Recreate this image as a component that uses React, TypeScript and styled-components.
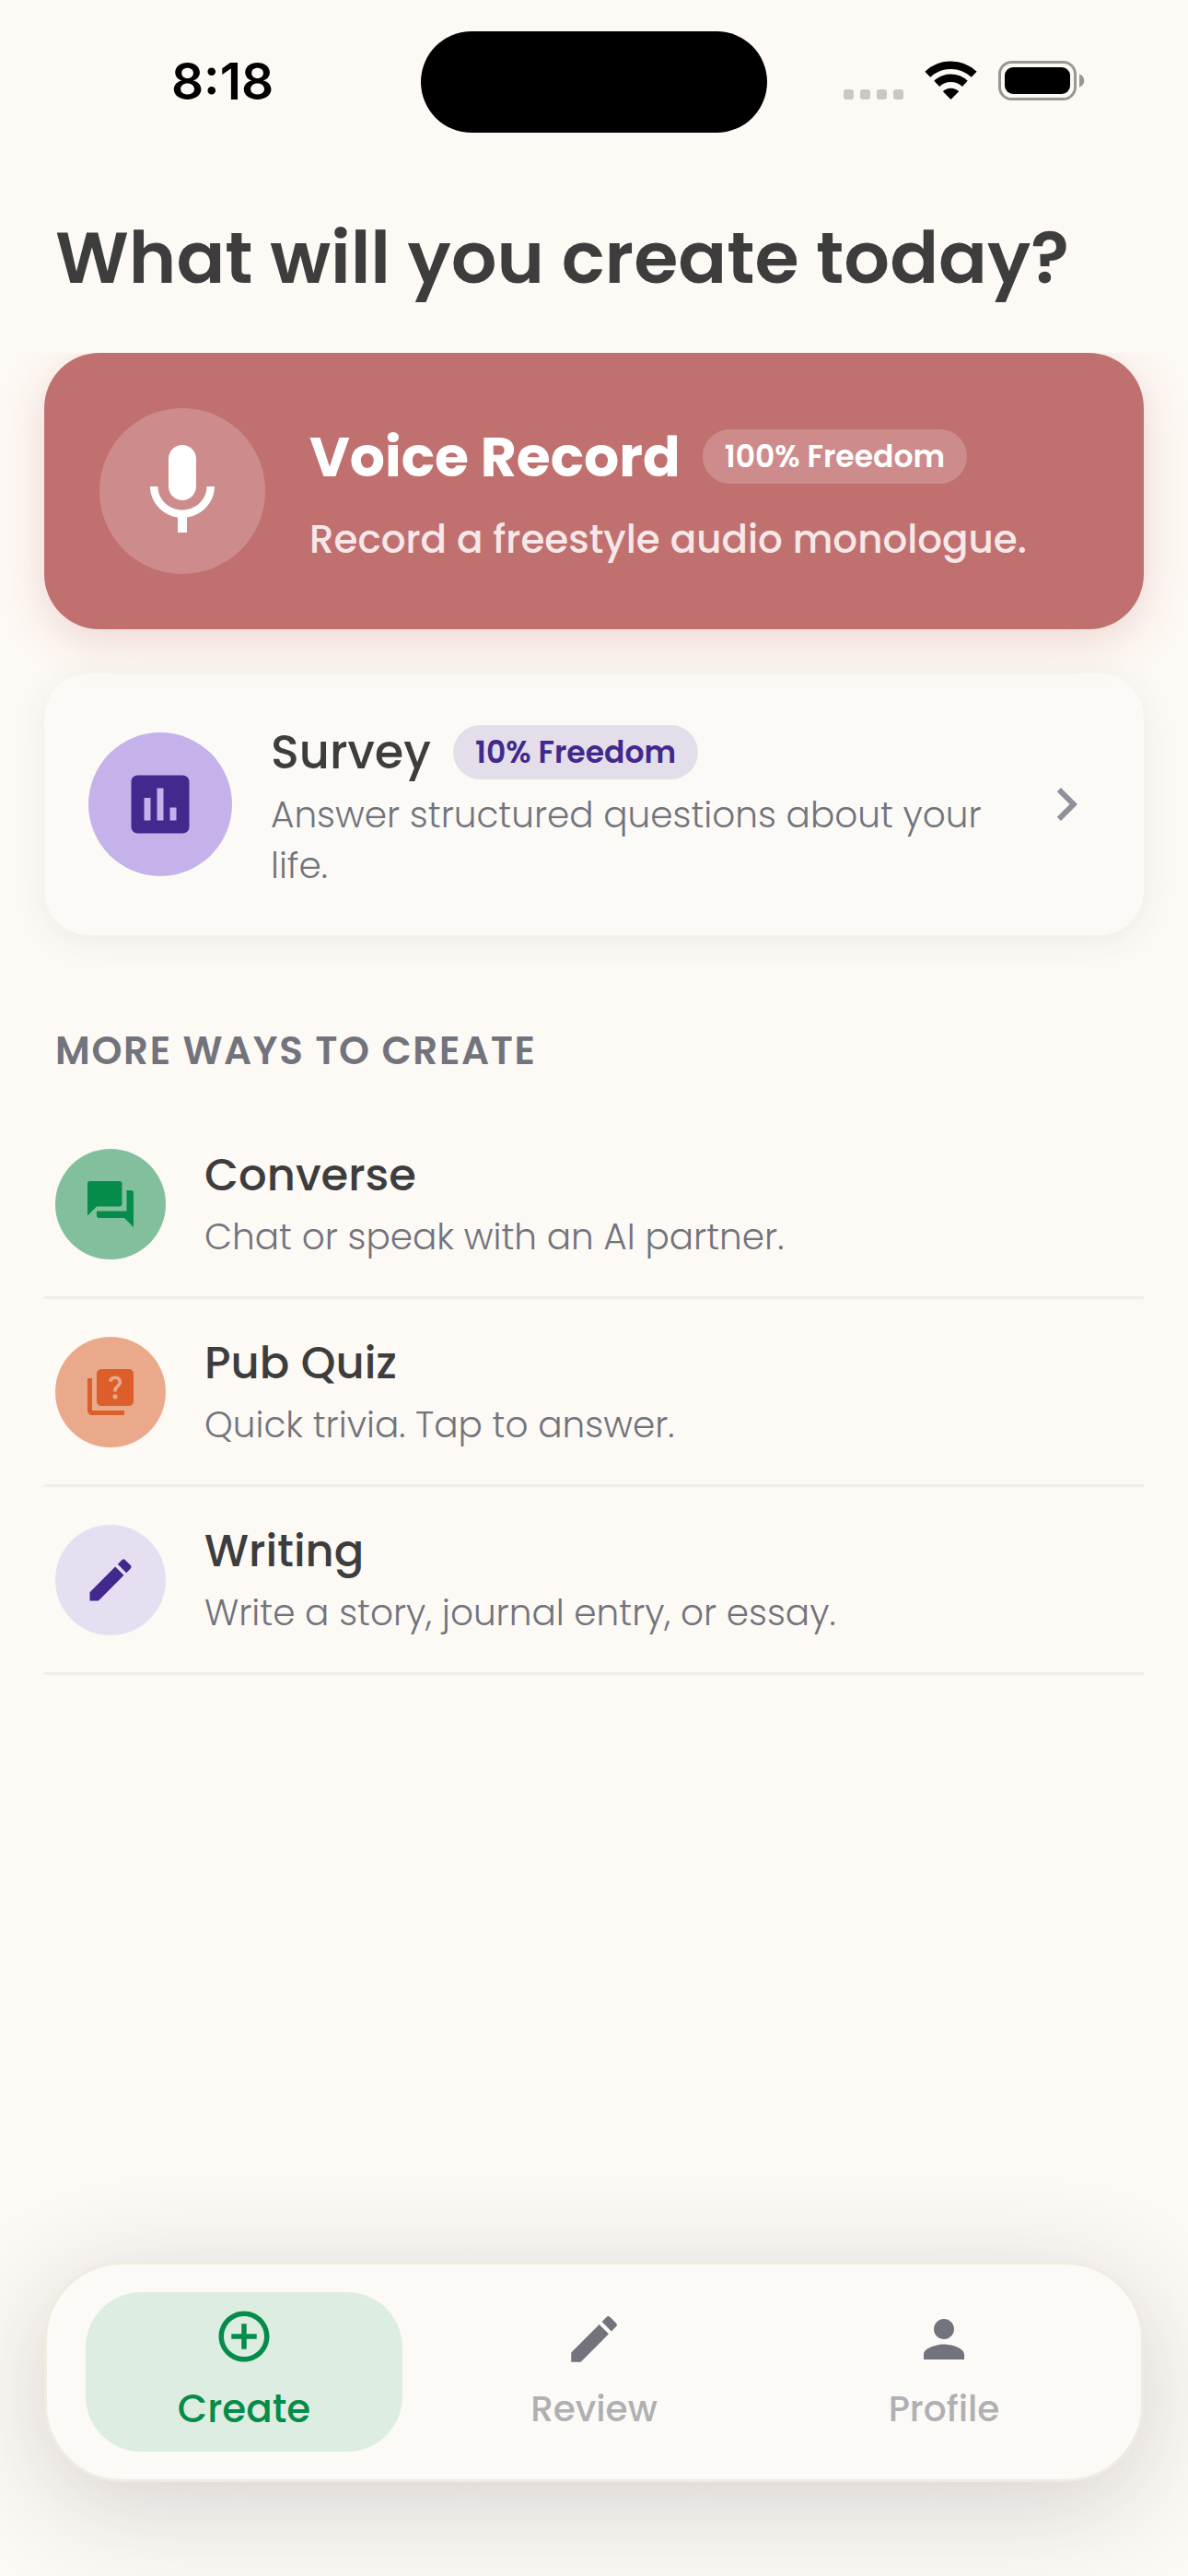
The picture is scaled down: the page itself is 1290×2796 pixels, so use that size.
import React from "react";
import styled, { createGlobalStyle } from "styled-components";
import {
  MdMic,
  MdPoll,
  MdChevronRight,
  MdForum,
  MdQuiz,
  MdEdit,
  MdAddCircleOutline,
  MdPerson,
} from "react-icons/md";

const font = 'Poppins, Inter, "Noto Sans", sans-serif';

const GlobalStyle = createGlobalStyle`
  *, *::before, *::after { box-sizing: border-box; }
  body {
    margin: 0;
    background: #fdf9f4;
    color: #3d3d3d;
    font-family: ${font};
  }
  button { font: inherit; color: inherit; border: 0; background: none; padding: 0; text-align: left; cursor: pointer; }
  a { color: inherit; text-decoration: none; }
  h1, h2, p, ul { margin: 0; padding: 0; }
  svg { display: block; flex: none; }
`;

const Screen = styled.div`
  min-height: 100vh;
  display: flex;
  flex-direction: column;
`;

const StatusBar = styled.header`
  display: grid;
  grid-template-columns: 1fr 376px 1fr;
  align-items: center;
  padding-top: 34px;
`;

const Time = styled.time`
  padding: 0 0 3px 26px;
  text-align: center;
  font-family: Inter, sans-serif;
  font-size: 55px;
  line-height: 66px;
  font-weight: 600;
  color: #000;
`;

const Island = styled.div`
  height: 110px;
  border-radius: 55px;
  background: #000;
`;

const StatusIcons = styled.div`
  display: flex;
  justify-content: flex-end;
  padding: 0 112px 3px 0;
`;

const Main = styled.main`
  flex: 1;
  display: flex;
  flex-direction: column;
  padding: 81px 48px 48px;
`;

const Heading = styled.h1`
  padding: 0 12px;
  font-size: 78px;
  line-height: 110px;
  font-weight: 600;
`;

const Card = styled.button<{ $featured?: boolean }>`
  display: flex;
  align-items: center;
  width: 100%;
  gap: ${(p) => (p.$featured ? 48 : 42)}px;
  margin-top: 48px;
  padding: ${(p) => (p.$featured ? "60px" : "48px")};
  border-radius: ${(p) => (p.$featured ? 60 : 48)}px;
  background: ${(p) => (p.$featured ? "#c17070" : "#fcfaf6")};
  box-shadow: ${(p) =>
    p.$featured
      ? "0 12px 48px rgba(193, 112, 112, 0.25)"
      : "0 6px 36px rgba(60, 60, 80, 0.08)"};
  clip-path: ${(p) => (p.$featured ? "inset(0 -48px -72px)" : "none")};
`;

const Disc = styled.span<{ $size: number; $bg: string; $fg: string }>`
  flex: none;
  display: flex;
  align-items: center;
  justify-content: center;
  width: ${(p) => p.$size}px;
  height: ${(p) => p.$size}px;
  border-radius: 50%;
  background: ${(p) => p.$bg};
  color: ${(p) => p.$fg};
`;

const CardBody = styled.span<{ $gap: number }>`
  flex: 1;
  display: flex;
  flex-direction: column;
  gap: ${(p) => p.$gap}px;
`;

const TitleRow = styled.span`
  display: flex;
  align-items: center;
  gap: 24px;
`;

const FeaturedTitle = styled.span`
  font-size: 60px;
  line-height: 90px;
  font-weight: 700;
  color: #fff;
`;

const FeaturedText = styled.span`
  font-size: 42px;
  line-height: 60px;
  font-weight: 500;
  color: #f6e8e8;
`;

const CardTitle = styled.span`
  font-size: 51px;
  line-height: 75px;
  font-weight: 500;
`;

const Muted = styled.span`
  font-size: 39px;
  line-height: 55px;
  font-weight: 300;
  color: #72737c;
`;

const Badge = styled.span<{ $bg: string; $fg: string }>`
  padding: 0 24px;
  border-radius: 30px;
  font-size: 33px;
  line-height: 59px;
  font-weight: 600;
  background: ${(p) => p.$bg};
  color: ${(p) => p.$fg};
`;

const SectionLabel = styled.h2`
  margin-top: 94px;
  padding: 0 12px;
  font-size: 42px;
  line-height: 63px;
  font-weight: 600;
  letter-spacing: 0.04em;
  color: #72737c;
`;

const List = styled.ul`
  list-style: none;
  margin-top: 34px;
`;

const Item = styled.li`
  border-bottom: 3px solid #f1eeea;
`;

const ItemButton = styled.button`
  display: flex;
  align-items: center;
  gap: 42px;
  width: 100%;
  height: 201px;
  padding: 0 12px;
`;

const ItemBody = styled.span`
  display: flex;
  flex-direction: column;
  gap: 6px;
`;

const ItemTitle = styled.span`
  font-size: 48px;
  line-height: 66px;
  font-weight: 500;
`;

const TabBar = styled.nav`
  display: grid;
  grid-template-columns: repeat(3, 1fr);
  gap: 36px;
  margin: 0 48px 102px;
  padding: 30px 42px;
  border: 3px solid #f1ece1;
  border-radius: 84px;
  background: #fcfaf6;
  box-shadow: 0 24px 120px rgba(50, 50, 65, 0.2);
`;

const Tab = styled.a<{ $active?: boolean }>`
  display: flex;
  flex-direction: column;
  align-items: center;
  justify-content: center;
  gap: 14px;
  height: 173px;
  border-radius: 60px;
  font-size: ${(p) => (p.$active ? 42 : 39)}px;
  line-height: ${(p) => (p.$active ? 63 : 58)}px;
  font-weight: 500;
  background: ${(p) => (p.$active ? "#deede2" : "transparent")};
  color: ${(p) => (p.$active ? "#058c4b" : "#b0b0b3")};
  svg { color: ${(p) => (p.$active ? "#058c4b" : "#72737c")}; }
`;

const StatusGlyphs = () => (
  <svg width="262" height="44" viewBox="0 0 262 44" aria-label="Wi-Fi on, battery full" role="img">
    <g fill="#cbc7c4">
      <rect x="0" y="31" width="11" height="11" rx="3" />
      <rect x="18" y="31" width="11" height="11" rx="3" />
      <rect x="36" y="31" width="11" height="11" rx="3" />
      <rect x="54" y="31" width="11" height="11" rx="3" />
    </g>
    <g fill="none" stroke="#000" strokeWidth="8.5">
      <path d="M91.300 14.800A36.500 36.500 0 0 1 141.700 14.800" />
      <path d="M101.200 24.800A22.400 22.400 0 0 1 131.800 24.800" />
    </g>
    <path d="M116.500 42L107.800 33.300A12.300 12.300 0 0 1 125.200 33.300Z" fill="#000" />
    <rect x="169.500" y="1.500" width="82" height="40" rx="13" fill="none" stroke="#999793" strokeWidth="3" />
    <rect x="175" y="7" width="71" height="29" rx="9" fill="#000" />
    <path d="M256 14.500c7 2 7 12 0 14z" fill="#999793" />
  </svg>
);

const ways = [
  { title: "Converse", text: "Chat or speak with an AI partner.", Icon: MdForum, bg: "#82c09d", fg: "#058c4b" },
  { title: "Pub Quiz", text: "Quick trivia. Tap to answer.", Icon: MdQuiz, bg: "#eaa98b", fg: "#dc5f2b" },
  { title: "Writing", text: "Write a story, journal entry, or essay.", Icon: MdEdit, bg: "#e6dff1", fg: "#41298d" },
];

export default function App() {
  return (
    <Screen>
      <GlobalStyle />
      <StatusBar>
        <Time>8:18</Time>
        <Island />
        <StatusIcons>
          <StatusGlyphs />
        </StatusIcons>
      </StatusBar>
      <Main>
        <Heading>What will you create today?</Heading>
        <Card $featured type="button">
          <Disc $size={180} $bg="#cd8c8b" $fg="#fff">
            <MdMic size={120} />
          </Disc>
          <CardBody $gap={15}>
            <TitleRow>
              <FeaturedTitle>Voice Record</FeaturedTitle>
              <Badge $bg="#cd8c8b" $fg="#fff">100% Freedom</Badge>
            </TitleRow>
            <FeaturedText>Record a freestyle audio monologue.</FeaturedText>
          </CardBody>
        </Card>
        <Card type="button">
          <Disc $size={156} $bg="#c5b2ea" $fg="#41298d">
            <MdPoll size={84} />
          </Disc>
          <CardBody $gap={3}>
            <TitleRow>
              <CardTitle>Survey</CardTitle>
              <Badge $bg="#e4deea" $fg="#41298d">10% Freedom</Badge>
            </TitleRow>
            <Muted>Answer structured questions about your life.</Muted>
          </CardBody>
          <MdChevronRight size={72} color="#8f9099" />
        </Card>
        <SectionLabel>MORE WAYS TO CREATE</SectionLabel>
        <List>
          {ways.map(({ title, text, Icon, bg, fg }) => (
            <Item key={title}>
              <ItemButton type="button">
                <Disc $size={120} $bg={bg} $fg={fg}>
                  <Icon size={60} />
                </Disc>
                <ItemBody>
                  <ItemTitle>{title}</ItemTitle>
                  <Muted>{text}</Muted>
                </ItemBody>
              </ItemButton>
            </Item>
          ))}
        </List>
      </Main>
      <TabBar>
        <Tab href="#create" $active aria-current="page">
          <MdAddCircleOutline size={66} />
          Create
        </Tab>
        <Tab href="#review">
          <MdEdit size={66} />
          Review
        </Tab>
        <Tab href="#profile">
          <MdPerson size={66} />
          Profile
        </Tab>
      </TabBar>
    </Screen>
  );
}
